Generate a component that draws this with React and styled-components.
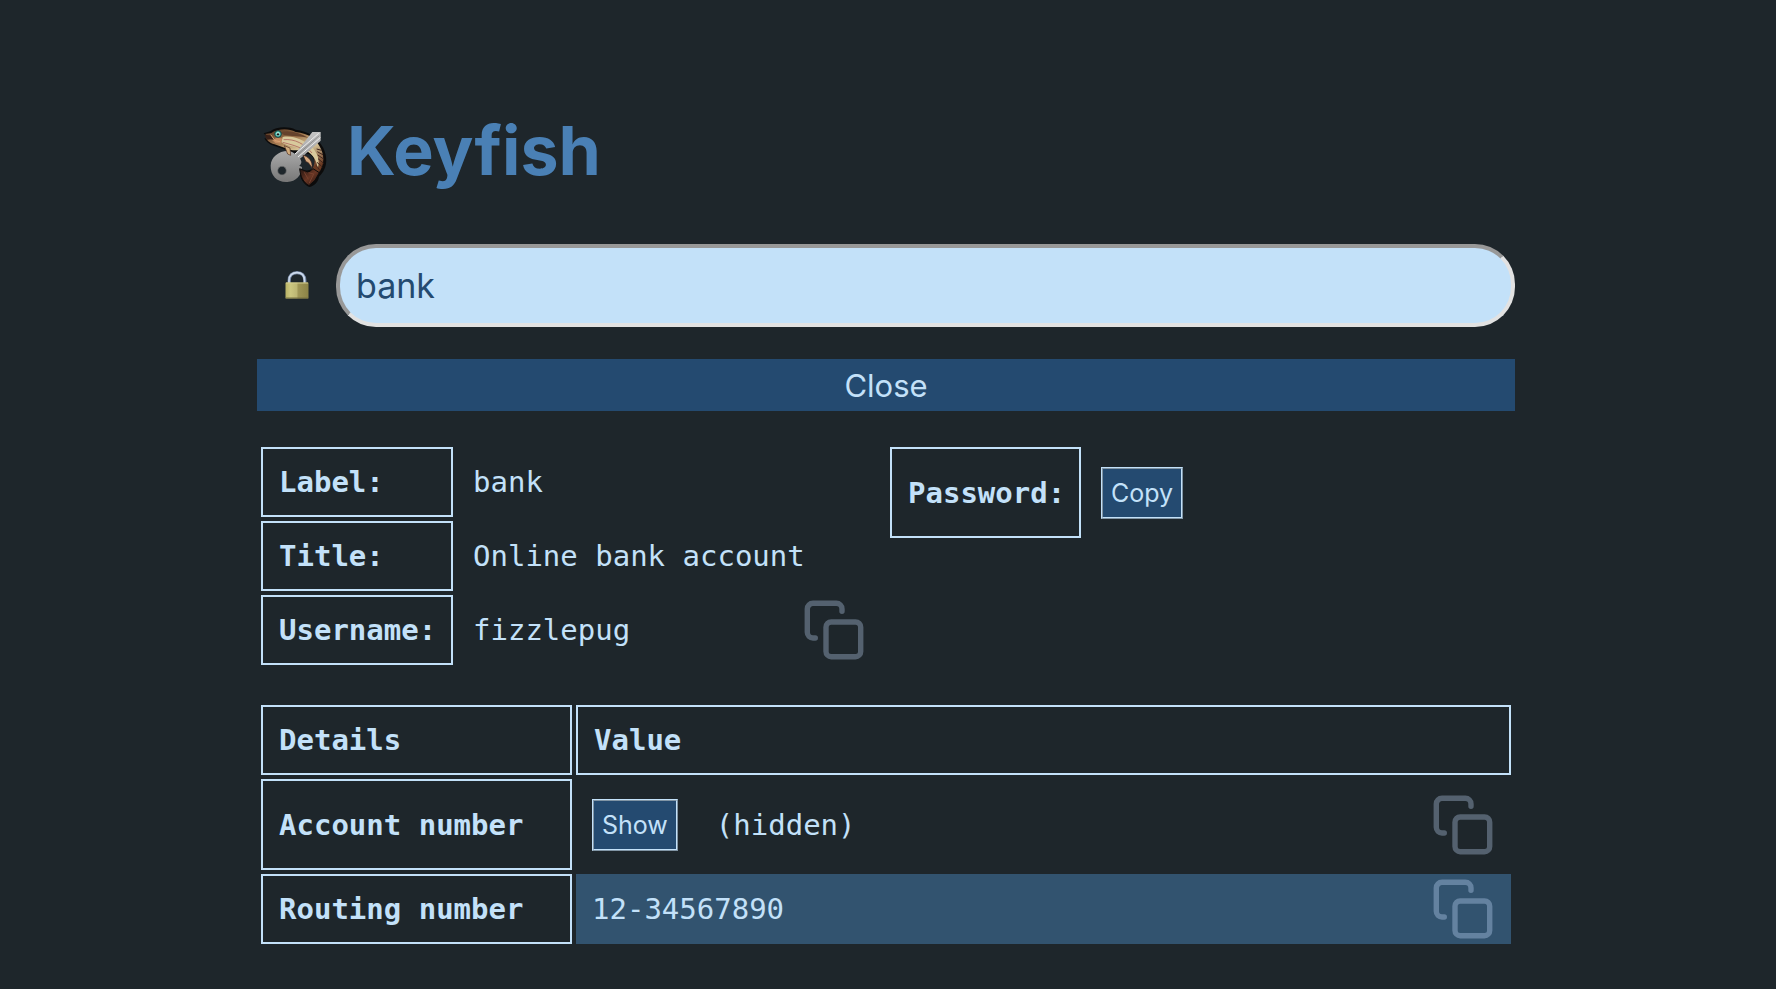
import React from "react";
import styled, { createGlobalStyle } from "styled-components";

const colors = {
  page: "#1e262b",
  text: "#c3e1f9",
  accent: "#4a80b5",
  button: "#244a70",
  highlight: "#32536f",
};

const Global = createGlobalStyle`
  * { box-sizing: border-box; }
  body {
    margin: 0;
    background: ${colors.page};
    color: ${colors.text};
    font-family: Inter, "Liberation Sans", sans-serif;
  }
`;

const Page = styled.main`
  max-width: 1262px;
  margin: 0 auto;
  padding: 107px 4px 40px 0;
`;

const Header = styled.header`
  display: flex;
  align-items: center;
  gap: 20px;
  padding-left: 6px;
  margin-bottom: 51px;
`;

const Title = styled.h1`
  margin: 0;
  font-size: 68px;
  line-height: 86px;
  font-weight: 700;
  color: ${colors.accent};
`;

const SearchRow = styled.form`
  display: flex;
  align-items: center;
  margin-bottom: 32px;
`;

const LockLabel = styled.label`
  flex: 0 0 79px;
  display: flex;
  justify-content: center;
`;

const SearchInput = styled.input`
  flex: 1;
  min-width: 0;
  height: 83px;
  padding: 0 16px;
  border: 4px solid;
  border-color: #989898 #e2e2e2 #e2e2e2 #989898;
  border-radius: 40px;
  background: #c3e1f9;
  color: ${colors.button};
  font: 400 34px Inter, "Liberation Sans", sans-serif;
  outline: none;
`;

const CloseButton = styled.button`
  display: block;
  width: 100%;
  height: 52px;
  padding: 0;
  border: 0;
  background: ${colors.button};
  color: ${colors.text};
  font: 400 31px Inter, "Liberation Sans", sans-serif;
`;

const Summary = styled.section`
  display: grid;
  grid-template-columns: 1fr 1fr;
  align-items: start;
  margin: 32px 0;
`;

const Table = styled.table`
  width: 100%;
  table-layout: fixed;
  border-spacing: 4px;
  font: 400 29px/34px "DejaVu Sans Mono", monospace;
`;

const HeadCell = styled.th`
  width: ${(p) => p.$width || "auto"};
  height: ${(p) => (p.$tall ? 91 : 70)}px;
  padding: 0 0 0 16px;
  border: 2px solid ${colors.text};
  text-align: left;
  font-weight: 700;
  white-space: nowrap;
`;

const ValueCell = styled.td`
  padding: 0 18px 0 16px;
  background: ${(p) => (p.$active ? colors.highlight : "transparent")};
`;

const ValueLine = styled.div`
  display: flex;
  align-items: center;
  gap: 38px;
  white-space: nowrap;
`;

const SmallButton = styled.button`
  height: 52px;
  padding: 0 8px;
  border: 2px ridge ${colors.text};
  background: ${colors.button};
  color: ${colors.text};
  font: 400 25px Inter, "Liberation Sans", sans-serif;
`;

const IconButton = styled.button`
  display: flex;
  margin-left: auto;
  padding: 0;
  border: 0;
  background: none;
  color: ${(p) => (p.$active ? "#6482a0" : "#54616f")};
`;

function CopyButton({ label, active }) {
  return (
    <IconButton type="button" aria-label={label} $active={active}>
      <svg width="60" height="60" viewBox="0 0 60 60" fill="none" stroke="currentColor" strokeWidth="5.4" strokeLinecap="round" strokeLinejoin="round" aria-hidden="true">
        <path d="M38 11.3V9a5.7 5.7 0 0 0-5.7-5.7H9A5.7 5.7 0 0 0 3.3 9v23.3A5.7 5.7 0 0 0 9 38h2.3" />
        <rect x="22" y="22" width="34.7" height="34.7" rx="5.2" />
      </svg>
    </IconButton>
  );
}

function Logo() {
  return (
    <svg width="64" height="80" viewBox="40 -16 192 240" aria-hidden="true">
      <defs>
        <linearGradient id="body" x1="0" y1="0" x2="0.5" y2="1">
          <stop offset="0" stopColor="#4a2c1b" />
          <stop offset="0.35" stopColor="#a47a50" />
          <stop offset="0.6" stopColor="#dac99c" />
          <stop offset="1" stopColor="#6a3a22" />
        </linearGradient>
        <linearGradient id="tail" x1="0" y1="0" x2="1" y2="1">
          <stop offset="0" stopColor="#211310" />
          <stop offset="0.5" stopColor="#693624" />
          <stop offset="1" stopColor="#1c0e0b" />
        </linearGradient>
        <linearGradient id="steel" x1="0" y1="0" x2="0" y2="1">
          <stop offset="0" stopColor="#c4c4c4" />
          <stop offset="0.5" stopColor="#a0a0a0" />
          <stop offset="1" stopColor="#777" />
        </linearGradient>
      </defs>
      <path d="M42 54L62 48C78 34 116 32 138 43C174 46 206 68 221 98C237 132 230 164 208 184C206 198 196 211 179 215C162 208 150 191 149 162C166 170 181 163 191 160C199 139 192 123 178 117C151 112 130 116 112 105L72 91C57 86 49 78 44 69L57 70Z" fill="#0c0b0b" />
      <path d="M46 56L65 53C85 39 117 38 138 50C178 53 204 76 214 101C227 130 221 158 203 177L184 165C198 148 199 127 183 113C163 96 146 109 121 103L81 89C62 85 53 77 50 69L63 68Z" fill="url(#body)" />
      <path d="M99 65C130 59 163 75 186 94C204 112 212 137 204 159C201 128 183 110 157 100C133 93 112 93 95 81Z" fill="#d8c99c" />
      <path d="M91 51C120 42 152 54 176 67C151 62 126 63 103 59Z" fill="#65422c" />
      <path d="M99 81C124 88 149 93 169 108M102 73C136 70 165 86 187 113" fill="none" stroke="#a34b4d" strokeWidth="2" />
      <path d="M67 74L81 68L98 69L93 85L77 83Z" fill="#c48b61" />
      <path d="M45 59L64 60L74 73L63 72L52 73Z" fill="#382018" />
      <path d="M63 58L76 76L91 79" fill="none" stroke="#d8a674" strokeWidth="3" />
      <path d="M201 101L216 105M203 109L221 119M204 119L222 131M205 130L222 144M202 141L218 155M200 151L211 166" stroke="#40251c" strokeWidth="3" />
      <path d="M188 50H213V76L151 130C158 139 155 146 149 151L157 155C156 180 139 199 113 200C83 202 62 180 63 151C64 124 89 105 118 107C127 109 131 112 136 116Z" fill="url(#steel)" />
      <path d="M136 116L207 54M145 125L212 67" stroke="#ededed" strokeWidth="3" />
      <path d="M141 120L209 61" stroke="#777" strokeWidth="2" />
      <circle cx="97" cy="166" r="13" fill={colors.page} stroke="#777" strokeWidth="2" />
      <path d="M150 160L177 171L190 160L209 172L196 195L178 211C161 201 152 184 150 160Z" fill="url(#tail)" stroke="#0c0b0b" strokeWidth="3" />
      <path d="M176 172L192 176L179 203M164 171L176 192" fill="none" stroke="#78412e" strokeWidth="3" />
      <path d="M104 91L121 98L123 120L114 116Z" fill="#d2ad7e" stroke="#4a2b1e" strokeWidth="2" />
      <path d="M160 120C175 122 190 138 187 157L176 142L169 139Z" fill="#d4a87e" stroke="#3b2019" strokeWidth="2" />
      <circle cx="85" cy="56" r="10" fill="#4fc8b6" stroke="#173c3c" strokeWidth="3" />
      <circle cx="85" cy="56" r="5" fill="#e6f4ec" />
      <circle cx="85" cy="57" r="3.5" fill="#101b1c" />
    </svg>
  );
}

function Lock() {
  return (
    <svg width="24" height="30" viewBox="0 0 24 30" role="img" aria-label="Search secrets">
      <defs>
        <linearGradient id="brass" x1="0" y1="0" x2="1" y2="0">
          <stop offset="0" stopColor="#b9b365" />
          <stop offset="0.22" stopColor="#ccc780" />
          <stop offset="0.5" stopColor="#bdb673" />
          <stop offset="0.54" stopColor="#a09757" />
          <stop offset="1" stopColor="#8c8346" />
        </linearGradient>
      </defs>
      <path d="M4.2 13V9.5C4.2 4.7 7.3 1.6 12 1.6S19.8 4.7 19.8 9.5V13" fill="none" stroke="#7788a5" strokeWidth="3.2" />
      <path d="M4 13V9.5C4 4.5 7.3 1.6 12 1.6S19.5 4.5 19.5 9.5V13" fill="none" stroke="#ccdaec" strokeWidth="1.6" />
      <rect x="0.5" y="11.5" width="23" height="16" rx="0.5" fill="url(#brass)" />
      <path d="M1 12H23" stroke="#d3cc8f" />
      <path d="M1 27H23" stroke="#777040" />
    </svg>
  );
}

export default function App() {
  return (
    <>
      <Global />
      <Page>
        <Header>
          <Logo />
          <Title>Keyfish</Title>
        </Header>
        <SearchRow onSubmit={(e) => e.preventDefault()}>
          <LockLabel htmlFor="query"><Lock /></LockLabel>
          <SearchInput id="query" type="text" defaultValue="bank" autoComplete="off" spellCheck={false} />
        </SearchRow>
        <CloseButton type="button">Close</CloseButton>
        <Summary>
          <Table>
            <tbody>
              <tr>
                <HeadCell scope="row" $width="192px">Label:</HeadCell>
                <ValueCell>bank</ValueCell>
              </tr>
              <tr>
                <HeadCell scope="row">Title:</HeadCell>
                <ValueCell>Online bank account</ValueCell>
              </tr>
              <tr>
                <HeadCell scope="row">Username:</HeadCell>
                <ValueCell>
                  <ValueLine>fizzlepug<CopyButton label="Copy username" /></ValueLine>
                </ValueCell>
              </tr>
            </tbody>
          </Table>
          <Table>
            <tbody>
              <tr>
                <HeadCell scope="row" $width="191px" $tall>Password:</HeadCell>
                <ValueCell><ValueLine><SmallButton type="button">Copy</SmallButton></ValueLine></ValueCell>
              </tr>
            </tbody>
          </Table>
        </Summary>
        <Table>
          <thead>
            <tr>
              <HeadCell scope="col" $width="311px">Details</HeadCell>
              <HeadCell scope="col">Value</HeadCell>
            </tr>
          </thead>
          <tbody>
            <tr>
              <HeadCell scope="row" $tall>Account number</HeadCell>
              <ValueCell>
                <ValueLine>
                  <SmallButton type="button">Show</SmallButton>
                  <span>(hidden)</span>
                  <CopyButton label="Copy account number" />
                </ValueLine>
              </ValueCell>
            </tr>
            <tr>
              <HeadCell scope="row">Routing number</HeadCell>
              <ValueCell $active>
                <ValueLine>12-34567890<CopyButton label="Copy routing number" active /></ValueLine>
              </ValueCell>
            </tr>
          </tbody>
        </Table>
      </Page>
    </>
  );
}
